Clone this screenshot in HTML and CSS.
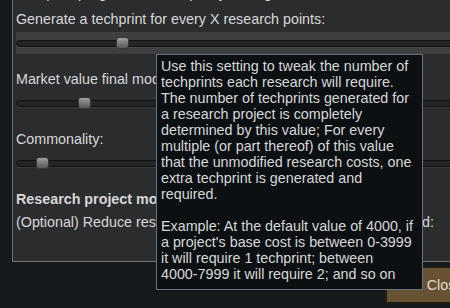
FILE: index.html
```html
<!DOCTYPE html>
<html lang="en">
<head>
    <meta charset="UTF-8">
    <meta name="viewport" content="width=device-width, initial-scale=1.0">
    <title>Techprint settings</title>
    <link rel="stylesheet" href="styles.css">
</head>
<body>

    <div class="dialog">
        <div class="panel">
            <div class="header">Techprint progression and quality settings</div>

            <div class="setting">
                <div class="label">Generate a techprint for every X research points:</div>
                <div class="slider-row hover">
                    <div class="track"><div class="thumb" style="left: 99px"></div></div>
                </div>
            </div>

            <div class="setting">
                <div class="label">Market value final modifier:</div>
                <div class="slider-row">
                    <div class="track"><div class="thumb" style="left: 61px"></div></div>
                </div>
            </div>

            <div class="setting">
                <div class="label">Commonality:</div>
                <div class="slider-row">
                    <div class="track"><div class="thumb" style="left: 19px"></div></div>
                </div>
            </div>

            <div class="section-title">Research project modifiers</div>
            <div class="label">(Optional) Reduce research point cost after techprints are applied:</div>
        </div>

        <div class="footer">
            <button class="close-btn">Close</button>
        </div>
    </div>

    <div class="tooltip">
        Use this setting to tweak the number of<br>
        techprints each research will require.<br>
        The number of techprints generated for<br>
        a research project is completely<br>
        determined by this value; For every<br>
        multiple (or part thereof) of this value<br>
        that the unmodified research costs, one<br>
        extra techprint is generated and<br>
        required.<br>
        <br>
        Example: At the default value of 4000, if<br>
        a project's base cost is between 0-3999<br>
        it will require 1 techprint; between<br>
        4000-7999 it will require 2; and so on
    </div>

</body>
</html>
```

FILE: styles.css
```css
body {
    font-family: "Liberation Sans", Arial, sans-serif;
    font-size: 14.3px;
    color: #d8d8d8;
    background-color: #16191c;
    margin: 0;
    width: 450px;
    height: 308px;
    overflow: hidden;
}

.dialog {
    width: 493px;
    margin-left: 12px;
    margin-top: -18px;
}

.panel {
    background-color: #2b2c2e;
    border: 1px solid #6f7276;
    padding: 1px 4px 30px 3px;
}

.header {
    line-height: 18px;
    margin-bottom: 8px;
    white-space: nowrap;
}

.setting {
    margin-bottom: 16px;
}

.label {
    line-height: 18px;
    white-space: nowrap;
}

.slider-row {
    height: 22px;
    margin-top: 4px;
    display: flex;
    align-items: center;
}

.hover {
    background-color: #3e3f41;
}

.track {
    position: relative;
    flex: 1;
    height: 7px;
    box-sizing: border-box;
    border-radius: 4px;
    background-color: #222425;
    border: 1px solid #111213;
    box-shadow: 0 1px 0 rgba(255, 255, 255, 0.06);
}

.thumb {
    position: absolute;
    top: -4px;
    width: 13px;
    height: 12px;
    box-sizing: border-box;
    border-radius: 3px;
    border: 1px solid #363738;
    background: linear-gradient(#a0a0a0, #727272 60%, #5a5a5a);
}

.section-title {
    font-weight: bold;
    line-height: 18px;
    margin-bottom: 5px;
}

.footer {
    display: flex;
    justify-content: flex-end;
    margin-top: 4px;
}

.close-btn {
    width: 120px;
    height: 38px;
    font-family: inherit;
    font-size: 14.3px;
    color: #e2ddd0;
    background-color: #675233;
    border: 2px solid #211d17;
    padding: 0;
}

.tooltip {
    position: absolute;
    left: 156px;
    top: 54px;
    width: 267px;
    box-sizing: border-box;
    padding: 3px 4px 7px 4px;
    line-height: 16px;
    background-color: #0c1013;
    border: 1px solid #6a737b;
    white-space: nowrap;
}
```
